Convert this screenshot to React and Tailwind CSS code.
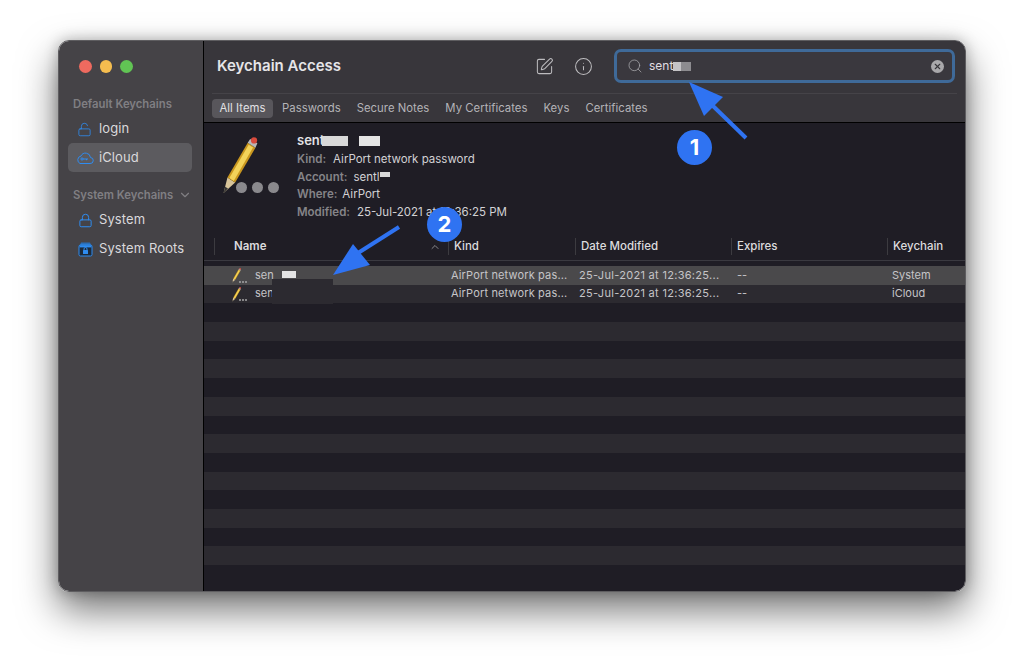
import { Lock, LockOpen, Search, SquarePen, Info, ChevronDown, ChevronUp, X } from "lucide-react"

function Pencil({ className }) {
  return (
    <svg viewBox="0 0 36 60" className={className}>
      <path d="M1 58 L5 42 L13 47 Z" fill="#d8c49a" />
      <path d="M1 58 L2.6 51.5 L5.6 53.4 Z" fill="#333" />
      <path d="M5 42 L26 6 L34 11 L13 47 Z" fill="#c9971f" />
      <path d="M7 42.5 L27 8 L31.5 10.8 L11.5 45.5 Z" fill="#f3d35a" />
      <path d="M26 6 L28.5 2 L36 6.5 L34 11 Z" fill="#b9b9b9" />
      <circle cx="32.5" cy="3.5" r="3.2" fill="#d94b3d" />
    </svg>
  )
}

function Dots({ big }) {
  return (
    <div className={big ? "flex gap-[5px]" : "flex gap-[1px]"}>
      {[0, 1, 2].map((i) => (
        <span key={i} className={big ? "w-[11px] h-[11px] rounded-full bg-[#8a898d]" : "w-[2px] h-[2px] rounded-full bg-[#a5a5a5]"} />
      ))}
    </div>
  )
}

function CloudKey() {
  return (
    <svg viewBox="0 0 18 14" className="w-[18px] h-[14px]" fill="none" stroke="#2f8cf0" strokeWidth="1">
      <path d="M4 12.5 H14 a3 3 0 0 0 .5 -6 a5 5 0 0 0 -9.5 -1.5 a4 4 0 0 0 -1 7.5 Z" />
      <circle cx="6" cy="8" r="1.1" />
      <path d="M7 8 H12 M10.5 8 V9.2" />
    </svg>
  )
}

function RootsIcon() {
  return (
    <svg viewBox="0 0 15 15" className="w-[15px] h-[15px]">
      <path d="M3 0.5 H12 L13 3 H2 Z" fill="#2a6fb8" />
      <rect x="1" y="3" width="13" height="11" rx="1.5" fill="#1d2a3a" stroke="#2f8cf0" />
      <rect x="1.5" y="3.2" width="12" height="2.2" fill="#2f8cf0" />
      <rect x="5" y="8" width="5" height="4" rx="0.5" fill="#2f8cf0" />
      <path d="M6 8 V7 a1.5 1.5 0 0 1 3 0 V8" fill="none" stroke="#2f8cf0" />
    </svg>
  )
}

function Blur({ w, h = "h-[9px]", tone = "bg-[#d8d8d8]" }) {
  return <span className={`inline-block ${w} ${h} ${tone}`} />
}

function Meta({ label, gap = "gap-[7px]", children }) {
  return (
    <div className={`h-[17.5px] flex items-center ${gap} text-[11.5px] leading-none`}>
      <span className="font-semibold text-[#858488]">{label}</span>
      <span className="text-[#d2d1d4] flex items-center">{children}</span>
    </div>
  )
}

function Row({ bg, keychain, blur }) {
  return (
    <div className={`h-[18.7px] pb-[1px] flex items-center text-[11px] text-[#c6c5c8] ${bg}`}>
      <div className="w-[28px] shrink-0 relative h-full">
        <Pencil className="w-[9px] h-[15px] absolute left-[28px] top-[2px]" />
        <span className="absolute left-[35px] bottom-[1px]"><Dots /></span>
      </div>
      <span className="ml-[23px] w-[18px]">sen</span>
      <span className="w-[178px] flex items-center">{blur}</span>
      <span className="w-[128px] tracking-[0.15px]">AirPort network pas...</span>
      <span className="w-[158px] tracking-[0.3px]">25-Jul-2021 at 12:36:25...</span>
      <span className="w-[155px]">--</span>
      <span>{keychain}</span>
    </div>
  )
}

function Col({ w, children, sort }) {
  return (
    <div className={`${w} h-[17px] shrink-0 border-l border-[#3c3b40] pl-[5px] flex items-center justify-between text-[11.5px] font-medium text-[#dcdbde]`}>
      {children}
      {sort}
    </div>
  )
}

export default function App() {
  const tabs = ["All Items", "Passwords", "Secure Notes", "My Certificates", "Keys", "Certificates"]
  const stripes = Array.from({ length: 15 }, (_, i) => i)

  return (
    <div className="w-[1024px] h-[668px] bg-white pl-[58px] pt-[40px] relative overflow-hidden font-['Inter',sans-serif]">
      <div className="w-[908px] h-[552px] flex rounded-[11px] overflow-hidden border border-[#5e5d60] shadow-[0_18px_38px_rgba(0,0,0,0.55),0_0_14px_rgba(0,0,0,0.25)]">
        {/* Sidebar */}
        <aside className="w-[145px] shrink-0 bg-[#454347] border-r border-black px-[10px]">
          <div className="flex gap-[8px] pt-[19px] pl-[10px]">
            <span className="w-[12.6px] h-[12.6px] rounded-full bg-[#ee6a5f]" />
            <span className="w-[12.6px] h-[12.6px] rounded-full bg-[#f5bd4f]" />
            <span className="w-[12.6px] h-[12.6px] rounded-full bg-[#61c454]" />
          </div>
          <p className="mt-[24px] pl-[4px] text-[11.3px] font-semibold text-[#807f83] leading-[14px]">Default Keychains</p>
          <div className="mt-[4px] h-[29px] flex items-center gap-[7px] pl-[8px] text-[#dad9dc] text-[13px] tracking-[0.1px]">
            <LockOpen size={15} strokeWidth={1.3} color="#2f8cf0" />
            login
          </div>
          <div className="-mt-[1px] pt-[1px] h-[29px] flex items-center gap-[5px] pl-[8px] -ml-[1px] mr-[1px] rounded-[5px] bg-[#5c5b5f] text-[#dad9dc] text-[13px] tracking-[0.1px]">
            <CloudKey />
            iCloud
          </div>
          <div className="mt-[16px] pl-[4px] flex items-center gap-[5px] text-[11.3px] font-semibold text-[#807f83] leading-[14px]">
            System Keychains
            <ChevronDown size={14} />
          </div>
          <div className="mt-[4px] h-[29px] flex items-center gap-[6px] pl-[9px] text-[#dad9dc] text-[13px] tracking-[0.1px]">
            <Lock size={15} strokeWidth={1.6} color="#2f8cf0" />
            System
          </div>
          <div className="h-[29px] flex items-center gap-[6px] pl-[9px] text-[#dad9dc] text-[13px] tracking-[0.1px]">
            <RootsIcon />
            System Roots
          </div>
        </aside>

        <main className="flex-1 min-w-0 flex flex-col bg-[#1f1d25]">
          {/* Toolbar */}
          <div className="h-[82px] shrink-0 bg-[#38363b] border-b border-black px-[8px]">
            <div className="h-[53px] pb-[2px] flex items-center border-b border-[#454348]">
              <h1 className="ml-[5px] text-[15px] font-semibold text-[#e6e5e8]">Keychain Access</h1>
              <SquarePen size={19} strokeWidth={1.3} color="#bdbcbf" className="ml-[194px]" />
              <Info size={19} strokeWidth={1.3} color="#bdbcbf" className="ml-[20px]" />
              <div className="ml-[21px] w-[341px] h-[34px] rounded-[7px] border-[3px] border-[#3f6a99] bg-[#3a383e] flex items-center pl-[10px] pr-[8px]">
                <Search size={16} strokeWidth={1.2} color="#a5a4a8" />
                <span className="ml-[6px] text-[12px] text-[#e0dfe2]">sent</span>
                <span className="w-[8px] h-[9px] bg-[#c4c3c6]" />
                <span className="w-[10px] h-[9px] bg-[#8d8c90]" />
                <span className="ml-auto w-[13px] h-[13px] rounded-full bg-[#a9a8ab] flex items-center justify-center">
                  <X size={9} strokeWidth={3} color="#38363b" />
                </span>
              </div>
            </div>
            <div className="h-[28px] flex items-center text-[11.3px] tracking-[0.04px] text-[#b4b3b7]">
              {tabs.map((tab) => (
                <span key={tab} className={tab === "All Items" ? "px-[7.5px] mr-[1px] h-[19px] leading-[19px] rounded-[4px] bg-[#58565b] text-[#e2e1e4]" : "px-[8px]"}>
                  {tab}
                </span>
              ))}
            </div>
          </div>

          {/* Detail */}
          <div className="h-[106px] shrink-0 flex pl-[18px] pt-[8px]">
            <div className="relative w-[75px] h-[60px] mt-[7px]">
              <Pencil className="w-[36px] h-[58px] absolute left-0 -top-[1px]" />
              <span className="absolute left-[14px] top-[44px]"><Dots big /></span>
            </div>
            <div>
              <div className="h-[19px] mb-[1px] flex items-center font-semibold text-[13px] text-[#e3e2e5]">
                sent
                <Blur w="w-[26px] -ml-[2px]" h="h-[10px]" />
                <Blur w="w-[21px] ml-[11px]" h="h-[10px]" tone="bg-[#e4e4e4]" />
              </div>
              <Meta label="Kind:">AirPort network password</Meta>
              <Meta label="Account:" gap="gap-[6px]">sentl<Blur w="w-[10px] -mt-[6px]" h="h-[5px]" /></Meta>
              <Meta label="Where:" gap="gap-[5px]">AirPort</Meta>
              <Meta label="Modified:">25-Jul-2021 at 12:36:25 PM</Meta>
            </div>
          </div>

          {/* Table header */}
          <div className="h-[32px] pt-[4px] shrink-0 flex items-center pl-[10px] border-b border-[#3a3940]">
            <Col w="w-[234px]" sort={<ChevronUp size={12} color="#8a898d" className="mr-[7px]" />}>
              <span className="pl-[14px] font-semibold">Name</span>
            </Col>
            <Col w="w-[127px]">Kind</Col>
            <Col w="w-[156px]">Date Modified</Col>
            <Col w="w-[156px]">Expires</Col>
            <Col w="w-[78px]">Keychain</Col>
          </div>

          {/* Rows */}
          <div className="flex-1 min-h-0 overflow-hidden pt-[5px]">
            <Row bg="bg-[#4a494b]" keychain="System" blur={<Blur w="w-[14px] ml-[9px]" h="h-[7px]" tone="bg-[#e4e4e4]" />} />
            <Row bg="bg-[#2c2a30]" keychain="iCloud" />
            {stripes.map((i) => (
              <div key={i} className={i % 2 === 0 ? "h-[18.7px]" : "h-[18.7px] bg-[#2c2a30]"} />
            ))}
          </div>
        </main>
      </div>

      {/* Annotations */}
      <svg viewBox="0 0 1024 668" className="absolute inset-0 w-[1024px] h-[668px] pointer-events-none">
        <path d="M746 138 L712 105" stroke="#2f73f2" strokeWidth="4" />
        <path d="M689 82 L723 97 L704 116 Z" fill="#2f73f2" />
        <path d="M399 227 L358 253" stroke="#2f73f2" strokeWidth="4" />
        <path d="M333 275 L353 244 L370 265 Z" fill="#2f73f2" />
      </svg>
      <div className="absolute left-[677px] top-[130px] w-[35px] h-[35px] rounded-full bg-[#2f73f2] flex items-center justify-center text-white text-[22px] font-bold">1</div>
      <div className="absolute left-[427px] top-[207px] w-[35px] h-[35px] rounded-full bg-[#2f73f2] flex items-center justify-center text-white text-[22px] font-bold">2</div>
      <div className="absolute left-[272px] top-[279px] w-[61px] h-[25px] bg-[#2c2a30]" />
    </div>
  )
}
